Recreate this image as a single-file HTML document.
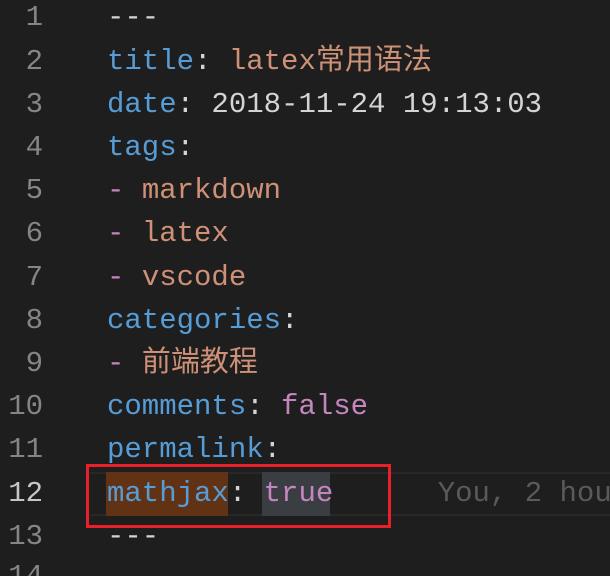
<!DOCTYPE html>
<html style="overflow:hidden;height:576px"><head><meta charset="utf-8"><style>
body{margin:0;width:610px;height:576px;background:#1e1e1e;overflow:hidden;position:relative;font-family:"Liberation Mono","Noto Sans CJK SC",monospace;font-size:29px}
.ln{position:absolute;left:0;width:43px;text-align:right;color:#858585;height:43px;line-height:43px}
.c{position:absolute;left:107px;height:43px;line-height:43px;white-space:pre;color:#d4d4d4}
.k{color:#569cd6}.s{color:#ce9178}.p{color:#c586c0}.w{color:#d4d4d4}
</style></head><body>
<div style="position:absolute;left:90px;top:472px;width:520px;height:44px;border-top:2px solid #282828;border-bottom:2px solid #282828;box-sizing:border-box"></div>
<div style="position:absolute;left:106px;top:472px;width:122px;height:44px;background:#613214"></div>
<div style="position:absolute;left:262px;top:472px;width:68px;height:44px;background:#3a3d41"></div>
<div style="position:absolute;left:86px;top:464px;width:305px;height:64px;border:3px solid #e8202a;box-sizing:border-box"></div>
<div class="ln" style="top:-4px">1</div><div class="c" style="top:-4px">---</div>
<div class="ln" style="top:40px">2</div><div class="c" style="top:40px"><span class="k">title</span>: <span class="s">latex常用语法</span></div>
<div class="ln" style="top:83px">3</div><div class="c" style="top:83px"><span class="k">date</span>: 2018-11-24 19:13:03</div>
<div class="ln" style="top:126px">4</div><div class="c" style="top:126px"><span class="k">tags</span>:</div>
<div class="ln" style="top:169px">5</div><div class="c" style="top:169px"><span class="p">-</span> <span class="s">markdown</span></div>
<div class="ln" style="top:212px">6</div><div class="c" style="top:212px"><span class="p">-</span> <span class="s">latex</span></div>
<div class="ln" style="top:256px">7</div><div class="c" style="top:256px"><span class="p">-</span> <span class="s">vscode</span></div>
<div class="ln" style="top:299px">8</div><div class="c" style="top:299px"><span class="k">categories</span>:</div>
<div class="ln" style="top:342px">9</div><div class="c" style="top:342px"><span class="p">-</span> <span class="s">前端教程</span></div>
<div class="ln" style="top:385px">10</div><div class="c" style="top:385px"><span class="k">comments</span>: <span class="p">false</span></div>
<div class="ln" style="top:428px">11</div><div class="c" style="top:428px"><span class="k">permalink</span>:</div>
<div class="ln" style="top:472px;color:#c6c6c6">12</div><div class="c" style="top:472px;width:503px;overflow:hidden"><span class="k">mathjax</span>: <span class="p">true</span>      <span style="color:#5a5a5a">You, 2 hours ago</span></div>
<div class="ln" style="top:515px">13</div><div class="c" style="top:515px">---</div>
<div class="ln" style="top:555px;height:21px;overflow:hidden">14</div>
</body></html>
